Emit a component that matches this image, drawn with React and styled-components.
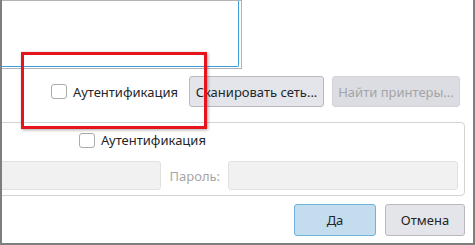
import React from "react";
import styled, { createGlobalStyle } from "styled-components";

const Global = createGlobalStyle`
  html, body { margin: 0; padding: 0; background: #ffffff; }
  body { font-family: "Noto Sans", "Open Sans", sans-serif; font-size: 13px; color: #232629; }
  * { box-sizing: border-box; }
`;

const Window = styled.div`
  position: relative;
  width: 475px;
  height: 245px;
  overflow: hidden;
  background: #ffffff;
  border-left: 2px solid #7e7e7e;
  border-right: 2px solid #7e7e7e;
  border-bottom: 2px solid #7e7e7e;
`;

const Inner = styled.div`
  margin-left: -60px;
  display: flex;
  flex-direction: column;
`;

const ListFrame = styled.div`
  width: 300px;
  height: 69px;
  border: 1px solid #b3b3b3;
  padding: 0 2px 1px 1px;
  background: #fff;
`;

const ListInner = styled.div`
  width: 100%;
  height: 100%;
  border: 1px solid #3d9fdc;
  border-top: none;
  border-radius: 0 0 2px 2px;
`;

const ActionRow = styled.div`
  margin-top: 7px;
  height: 31px;
  display: flex;
  align-items: center;
  justify-content: flex-end;
  padding-right: 13px;
`;

const Check = styled.span`
  display: inline-block;
  width: 16px;
  height: 15px;
  border: 1px solid #ababab;
  border-radius: 3px;
  background: #fff;
  flex: none;
`;

const CheckLabel = styled.label`
  display: flex;
  align-items: center;
  gap: 6px;
  color: #232629;
  white-space: nowrap;
  margin-right: ${(p) => p.$mr || 0}px;
`;

const Button = styled.button`
  height: ${(p) => p.$h || 31}px;
  width: ${(p) => p.$w}px;
  margin-left: ${(p) => p.$ml || 0}px;
  padding: 0;
  font: inherit;
  font-size: 13px;
  border-radius: 3px;
  border: 1px solid ${(p) => (p.$primary ? "#6fb1df" : p.disabled ? "#d2d3d8" : "#b8b9bf")};
  background: ${(p) => (p.$primary ? "#c3ddef" : p.disabled ? "#dcdde2" : "#e4e5ea")};
  color: ${(p) => (p.disabled ? "#a3a4a8" : "#232629")};
  white-space: nowrap;
  flex: none;
`;

const Group = styled.div`
  margin-top: 15px;
  margin-right: 8px;
  height: 74px;
  border: 1px solid #d3d3d3;
  border-radius: 4px;
  display: flex;
  flex-direction: column;
`;

const GroupCheckRow = styled.div`
  display: flex;
  padding-left: 136px;
  margin-top: 8px;
`;

const InputRow = styled.div`
  display: flex;
  align-items: center;
  margin-top: 12px;
  padding-right: 6px;
`;

const Field = styled.div`
  height: 29px;
  flex: ${(p) => (p.$grow ? 1 : "none")};
  width: ${(p) => (p.$w ? `${p.$w}px` : "auto")};
  background: #f1f1f1;
  border: 1px solid #e1e1e1;
  border-radius: 3px;
`;

const FieldLabel = styled.span`
  color: #a6a6a6;
  margin: 0 8px 0 9px;
  white-space: nowrap;
`;

const Footer = styled.div`
  margin-top: 8px;
  display: flex;
  justify-content: flex-end;
  padding-right: 8px;
`;

const Annotation = styled.div`
  position: absolute;
  left: 19px;
  top: 52px;
  width: 186px;
  height: 77px;
  border: 3px solid #e8141c;
  box-shadow: 1px 1px 3px rgba(0, 0, 0, 0.35);
  pointer-events: none;
`;

export default function App() {
  return (
    <>
      <Global />
      <Window>
        <Inner>
          <ListFrame>
            <ListInner />
          </ListFrame>
          <ActionRow>
            <CheckLabel $mr={11}>
              <Check />
              Аутентификация
            </CheckLabel>
            <Button $w={135}>Сканировать сеть...</Button>
            <Button $w={128} $ml={8} disabled>
              Найти принтеры...
            </Button>
          </ActionRow>
          <Group>
            <GroupCheckRow>
              <CheckLabel>
                <Check />
                Аутентификация
              </CheckLabel>
            </GroupCheckRow>
            <InputRow>
              <Field $grow />
              <FieldLabel>Пароль:</FieldLabel>
              <Field $w={230} />
            </InputRow>
          </Group>
          <Footer>
            <Button $w={82} $h={32} $primary>
              Да
            </Button>
            <Button $w={80} $h={32} $ml={9}>
              Отмена
            </Button>
          </Footer>
        </Inner>
        <Annotation />
      </Window>
    </>
  );
}
